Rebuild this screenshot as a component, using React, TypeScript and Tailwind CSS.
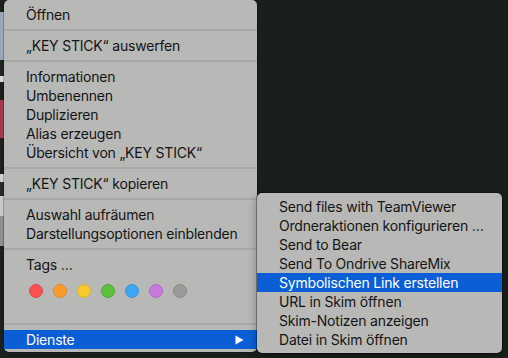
import React from "react";

const font = { fontFamily: "Inter, 'Noto Sans', 'Liberation Sans', sans-serif" };

function Item({ label, active, arrow }: { label: string; active?: boolean; arrow?: boolean }) {
  return (
    <div
      className={`h-[19px] flex items-center justify-between pl-[22px] pr-[13px] text-[14px] leading-none tracking-[-0.2px] ${
        active ? "bg-[#0b5ed6] text-white" : "text-[#141414]"
      }`}
    >
      <span>{label}</span>
      {arrow && (
        <svg width="9" height="10" viewBox="0 0 9 10" className="fill-white">
          <path d="M0.5 0.5 L8.5 5 L0.5 9.5 Z" />
        </svg>
      )}
    </div>
  );
}

function Sep() {
  return (
    <div className="h-[12px] flex items-center">
      <div className="h-[2px] w-full bg-[#a7a8a6]" />
    </div>
  );
}

const tagColors = [
  "bg-[#fc5150] border-[#e04645]",
  "bg-[#f89a2e] border-[#e08827]",
  "bg-[#f5ca2f] border-[#dcb42a]",
  "bg-[#5cc03d] border-[#4ea934]",
  "bg-[#3fa8f4] border-[#3894d8]",
  "bg-[#c679db] border-[#ad69c1]",
  "bg-[#9a9a9a] border-[#888888]",
];

const strip = [
  { h: "h-[12px]", c: "bg-[#1a201c]" },
  { h: "h-[48px]", c: "bg-[#9aa7b8]" },
  { h: "h-[16px]", c: "bg-[#20251f]" },
  { h: "h-[6px]", c: "bg-[#d8d8d8]" },
  { h: "h-[18px]", c: "bg-[#1c211d]" },
  { h: "h-[38px]", c: "bg-[#a43a4c]" },
  { h: "h-[36px]", c: "bg-[#1d221e]" },
  { h: "h-[8px]", c: "bg-[#cfcfcf]" },
  { h: "h-[14px]", c: "bg-[#252a26]" },
  { h: "h-[20px]", c: "bg-[#c9c9c9]" },
  { h: "h-[30px]", c: "bg-[#8e908e]" },
  { h: "h-[112px]", c: "bg-[#1a201c]" },
];

export default function App() {
  return (
    <div className="w-[508px] h-[358px] bg-[#19201b] flex items-start overflow-hidden" style={font}>
      {/* desktop peeking out on the left */}
      <div className="w-[4px] flex flex-col shrink-0">
        {strip.map((s, i) => (
          <div key={i} className={`${s.h} ${s.c}`} />
        ))}
      </div>

      {/* main context menu */}
      <div className="w-[253px] h-[352px] shrink-0 bg-[#b8b9b7] rounded-[5px] pt-[5px] pb-[3px] flex flex-col shadow-[0_0_0_1px_rgba(0,0,0,0.25)]">
        <Item label="Öffnen" />
        <Sep />
        <Item label="„KEY STICK“ auswerfen" />
        <Sep />
        <Item label="Informationen" />
        <Item label="Umbenennen" />
        <Item label="Duplizieren" />
        <Item label="Alias erzeugen" />
        <Item label="Übersicht von „KEY STICK“" />
        <Sep />
        <Item label="„KEY STICK“ kopieren" />
        <Sep />
        <Item label="Auswahl aufräumen" />
        <Item label="Darstellungsoptionen einblenden" />
        <Sep />
        <Item label="Tags …" />
        <div className="h-[44px] flex items-start gap-[10px] pl-[25px] pt-[10px]">
          {tagColors.map((c, i) => (
            <div key={i} className={`w-[14px] h-[14px] rounded-full border ${c}`} />
          ))}
        </div>
        <Sep />
        <Item label="Dienste" active arrow />
      </div>

      {/* services submenu */}
      <div className="w-[245px] h-[160px] mt-[193px] shrink-0 bg-[#b8b9b7] rounded-[5px] py-[4px] flex flex-col shadow-[0_0_0_1px_rgba(0,0,0,0.3),0_4px_10px_rgba(0,0,0,0.35)]">
        <Item label="Send files with TeamViewer" />
        <Item label="Ordneraktionen konfigurieren …" />
        <Item label="Send to Bear" />
        <Item label="Send To Ondrive ShareMix" />
        <Item label="Symbolischen Link erstellen" active />
        <Item label="URL in Skim öffnen" />
        <Item label="Skim-Notizen anzeigen" />
        <Item label="Datei in Skim öffnen" />
      </div>
    </div>
  );
}
